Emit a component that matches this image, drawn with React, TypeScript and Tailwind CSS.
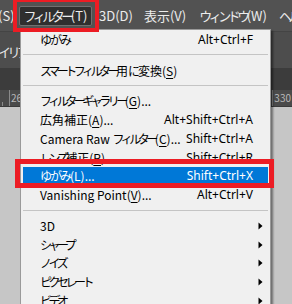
import React from "react";

const KATA = /^[\u30A0-\u30FF]+$/;
const HIRA = /^[\u3040-\u309F]+$/;

function J({ t }: { t: string }) {
  const parts = t.split(/([\u30A0-\u30FF]+|[\u3040-\u309F]+)/).filter((p) => p !== "");
  return (
    <>
      {parts.map((p, i) =>
        KATA.test(p) ? (
          <span key={i} className="tracking-[-3.5px]">
            {p}
          </span>
        ) : HIRA.test(p) ? (
          <span key={i} className="tracking-[-2px]">
            {p}
          </span>
        ) : (
          <React.Fragment key={i}>{p}</React.Fragment>
        )
      )}
    </>
  );
}

type ItemProps = {
  pre: string;
  acc?: string;
  post?: string;
  shortcut?: string;
  arrow?: boolean;
  active?: boolean;
};

function Arrow() {
  return (
    <svg className="absolute right-[5px] top-1/2 -translate-y-1/2" width="5" height="8" viewBox="0 0 5 8">
      <path d="M0.5 0.5 L4.5 4 L0.5 7.5 Z" fill="#000" />
    </svg>
  );
}

function Item({ pre, acc, post, shortcut, arrow, active }: ItemProps) {
  return (
    <div
      className={
        active
          ? "relative mx-[2px] flex h-[18.75px] items-center bg-[#0078d7] pl-[17px] pr-[15px] text-white"
          : "relative mx-[2px] flex h-[18.75px] items-center pl-[17px] pr-[15px] text-black"
      }
    >
      <span className="whitespace-nowrap">
        <J t={pre} />
        {acc && (
          <>
            (<span className="underline decoration-1 underline-offset-[2px]">{acc}</span>)
          </>
        )}
        {post}
      </span>
      {shortcut && (
        <span className="ml-auto whitespace-nowrap font-[family-name:'Noto_Sans',sans-serif]">{shortcut}</span>
      )}
      {arrow && <Arrow />}
    </div>
  );
}

function Sep() {
  return (
    <div className="mx-[2px] h-[12px] pt-[5px]">
      <div className="h-px bg-[#c4c4c4]" />
    </div>
  );
}

export default function App() {
  return (
    <div className="relative h-[304px] w-[292px] overflow-hidden font-[family-name:'Noto_Sans_CJK_JP',sans-serif] text-[12px]">
      {/* menubar */}
      <div className="flex h-[32px] items-center overflow-hidden whitespace-nowrap border-b border-[#444] bg-[#525252] text-[13px] text-[#ececec]">
        <span className="ml-[-2px] w-[15px] shrink-0">(S)</span>
        <span className="ml-[6px] flex h-[20px] w-[73px] shrink-0 items-center justify-center rounded-[2px] border border-[#707070] bg-[#2f2f2f]">
          <J t="フィルター(T)" />
        </span>
        <span className="ml-[7px] shrink-0">3D(D)</span>
        <span className="ml-[11px] shrink-0">表示(V)</span>
        <span className="ml-[13px] shrink-0">
          <J t="ウィンドウ(W)" />
        </span>
        <span className="ml-[12px] shrink-0">
          <J t="ヘルプ" />
        </span>
      </div>
      {/* options bar */}
      <div className="flex h-[36px] items-center bg-[#4d4d4d] pt-[3px] text-[13px] text-[#e6e6e6]">
        <span className="ml-[-2px] whitespace-nowrap">
          <J t="イリア" />
        </span>
      </div>
      {/* tabs band */}
      <div className="h-[22px] bg-[#3c3c3c]" />
      {/* ruler */}
      <div className="relative flex h-[17px] items-center border-b border-[#3a3a3a] bg-[#4a4a4a] text-[10px] text-[#b8b8b8]">
        <div className="ml-[2px] h-[4px] w-px self-end bg-[#8a8a8a]" />
        <div className="ml-[6px] h-full w-px bg-[#8a8a8a]" />
        <span className="ml-[1px] leading-none">26</span>
        <div className="ml-auto h-full w-px bg-[#8a8a8a]" />
        <span className="ml-[1px] mr-[1px] leading-none">330</span>
      </div>
      {/* canvas */}
      <div className="h-[197px] bg-[#c6c6c6]" />

      {/* dropdown menu */}
      <div className="absolute left-[20px] top-[29px] w-[251px] border border-[#9a9a9a] bg-[#f0f0f0] shadow-[2px_2px_2px_rgba(0,0,0,0.45)]">
        <div className="h-[0.5px]" />
        <Item pre="ゆがみ" shortcut="Alt+Ctrl+F" />
        <Sep />
        <Item pre="スマートフィルター用に変換" acc="S" />
        <Sep />
        <Item pre="フィルターギャラリー" acc="G" post="..." />
        <Item pre="広角補正" acc="A" post="..." shortcut="Alt+Shift+Ctrl+A" />
        <Item pre="Camera Raw フィルター" acc="C" post="..." shortcut="Shift+Ctrl+A" />
        <Item pre="レンズ補正" acc="R" post="..." shortcut="Shift+Ctrl+R" />
        <Item pre="ゆがみ" acc="L" post="..." shortcut="Shift+Ctrl+X" active />
        <Item pre="Vanishing Point" acc="V" post="..." shortcut="Alt+Ctrl+V" />
        <Sep />
        <Item pre="3D" arrow />
        <Item pre="シャープ" arrow />
        <Item pre="ノイズ" arrow />
        <Item pre="ピクセレート" arrow />
        <Item pre="ビデオ" arrow />
        <Item pre="フィルター" arrow />
      </div>

      {/* red annotation boxes */}
      <div className="pointer-events-none absolute left-[13px] top-[-2px] h-[34px] w-[86px] border-[4px] border-[#ec1c24]" />
      <div className="pointer-events-none absolute left-[15px] top-[159px] h-[29px] w-[259px] border-[5px] border-[#ec1c24]" />
    </div>
  );
}
